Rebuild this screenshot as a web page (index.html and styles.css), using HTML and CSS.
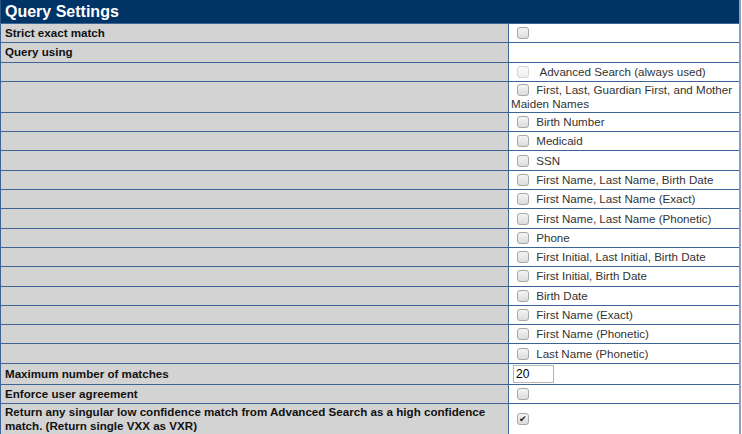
FILE: index.html
```html
<!DOCTYPE html>
<html lang="en">
<head>
    <meta charset="UTF-8">
    <title>Query Settings</title>
    <link rel="stylesheet" href="styles.css">
</head>
<body>
    <table class="settings">
        <tr>
            <th class="section-title" colspan="2">Query Settings</th>
        </tr>
        <tr>
            <td class="label">Strict exact match</td>
            <td class="value"><input type="checkbox"></td>
        </tr>
        <tr>
            <td class="label">Query using</td>
            <td class="value"></td>
        </tr>
        <tr>
            <td class="label"></td>
            <td class="value"><input type="checkbox" disabled> &nbsp;Advanced Search (always used)</td>
        </tr>
        <tr>
            <td class="label"></td>
            <td class="value"><input type="checkbox"> First, Last, Guardian First, and Mother Maiden Names</td>
        </tr>
        <tr>
            <td class="label"></td>
            <td class="value"><input type="checkbox"> Birth Number</td>
        </tr>
        <tr>
            <td class="label"></td>
            <td class="value"><input type="checkbox"> Medicaid</td>
        </tr>
        <tr>
            <td class="label"></td>
            <td class="value"><input type="checkbox"> SSN</td>
        </tr>
        <tr>
            <td class="label"></td>
            <td class="value"><input type="checkbox"> First Name, Last Name, Birth Date</td>
        </tr>
        <tr>
            <td class="label"></td>
            <td class="value"><input type="checkbox"> First Name, Last Name (Exact)</td>
        </tr>
        <tr>
            <td class="label"></td>
            <td class="value"><input type="checkbox"> First Name, Last Name (Phonetic)</td>
        </tr>
        <tr>
            <td class="label"></td>
            <td class="value"><input type="checkbox"> Phone</td>
        </tr>
        <tr>
            <td class="label"></td>
            <td class="value"><input type="checkbox"> First Initial, Last Initial, Birth Date</td>
        </tr>
        <tr>
            <td class="label"></td>
            <td class="value"><input type="checkbox"> First Initial, Birth Date</td>
        </tr>
        <tr>
            <td class="label"></td>
            <td class="value"><input type="checkbox"> Birth Date</td>
        </tr>
        <tr>
            <td class="label"></td>
            <td class="value"><input type="checkbox"> First Name (Exact)</td>
        </tr>
        <tr>
            <td class="label"></td>
            <td class="value"><input type="checkbox"> First Name (Phonetic)</td>
        </tr>
        <tr>
            <td class="label"></td>
            <td class="value"><input type="checkbox"> Last Name (Phonetic)</td>
        </tr>
        <tr>
            <td class="label">Maximum number of matches</td>
            <td class="value"><input type="text" class="num-input" value="20"></td>
        </tr>
        <tr>
            <td class="label">Enforce user agreement</td>
            <td class="value"><input type="checkbox"></td>
        </tr>
        <tr>
            <td class="label">Return any singular low confidence match from Advanced Search as a high confidence match. (Return single VXX as VXR)</td>
            <td class="value"><input type="checkbox" checked></td>
        </tr>
    </table>
</body>
</html>
```

FILE: styles.css
```css
body {
    margin: 0;
    font-family: "Liberation Sans", Arial, sans-serif;
    font-size: 11.6px;
    color: #333;
    background-color: #fff;
}
.settings {
    width: 741px;
    border-collapse: collapse;
    border-left: 1px solid #2a5585;
    border-right: 2px solid #8aa0bb;
    border-bottom: 2px solid #2a5585;
}
.settings td {
    border: 1px solid #3c6494;
    padding: 1px 2px;
    height: 16.3px;
    vertical-align: middle;
}
.section-title {
    background-color: #003366;
    color: #fff;
    font-size: 16px;
    font-weight: bold;
    text-align: left;
    padding: 2px 4px;
    height: 19px;
    line-height: 19px;
}
.label {
    width: 501px;
    background-color: #d3d3d3;
    font-weight: bold;
    color: #111;
    padding-left: 4px !important;
    line-height: 14px;
}
.value {
    background-color: #fff;
    line-height: 14px;
}
.value input[type="checkbox"] {
    appearance: none;
    -webkit-appearance: none;
    position: relative;
    box-sizing: border-box;
    width: 12px;
    height: 12px;
    margin: 0 4px 0 6px;
    vertical-align: -2px;
    border: 1px solid #a8a8a8;
    border-radius: 3px;
    background: linear-gradient(#f4f4f4, #dcdcdc);
}
.value input[type="checkbox"]:disabled {
    border-color: #d6d6d6;
    background: linear-gradient(#fafafa, #efefef);
}
.value input[type="checkbox"]:checked::before {
    content: "\2714";
    position: absolute;
    left: 1px;
    top: -1px;
    font-size: 9px;
    line-height: 12px;
    color: #222;
}
.num-input {
    box-sizing: border-box;
    width: 41px;
    height: 18px;
    padding: 0 2px;
    margin: 0 0 0 2px;
    vertical-align: middle;
    border: 1px solid #b5b5b5;
    font-family: inherit;
    font-size: 12px;
    color: #000;
}
```
